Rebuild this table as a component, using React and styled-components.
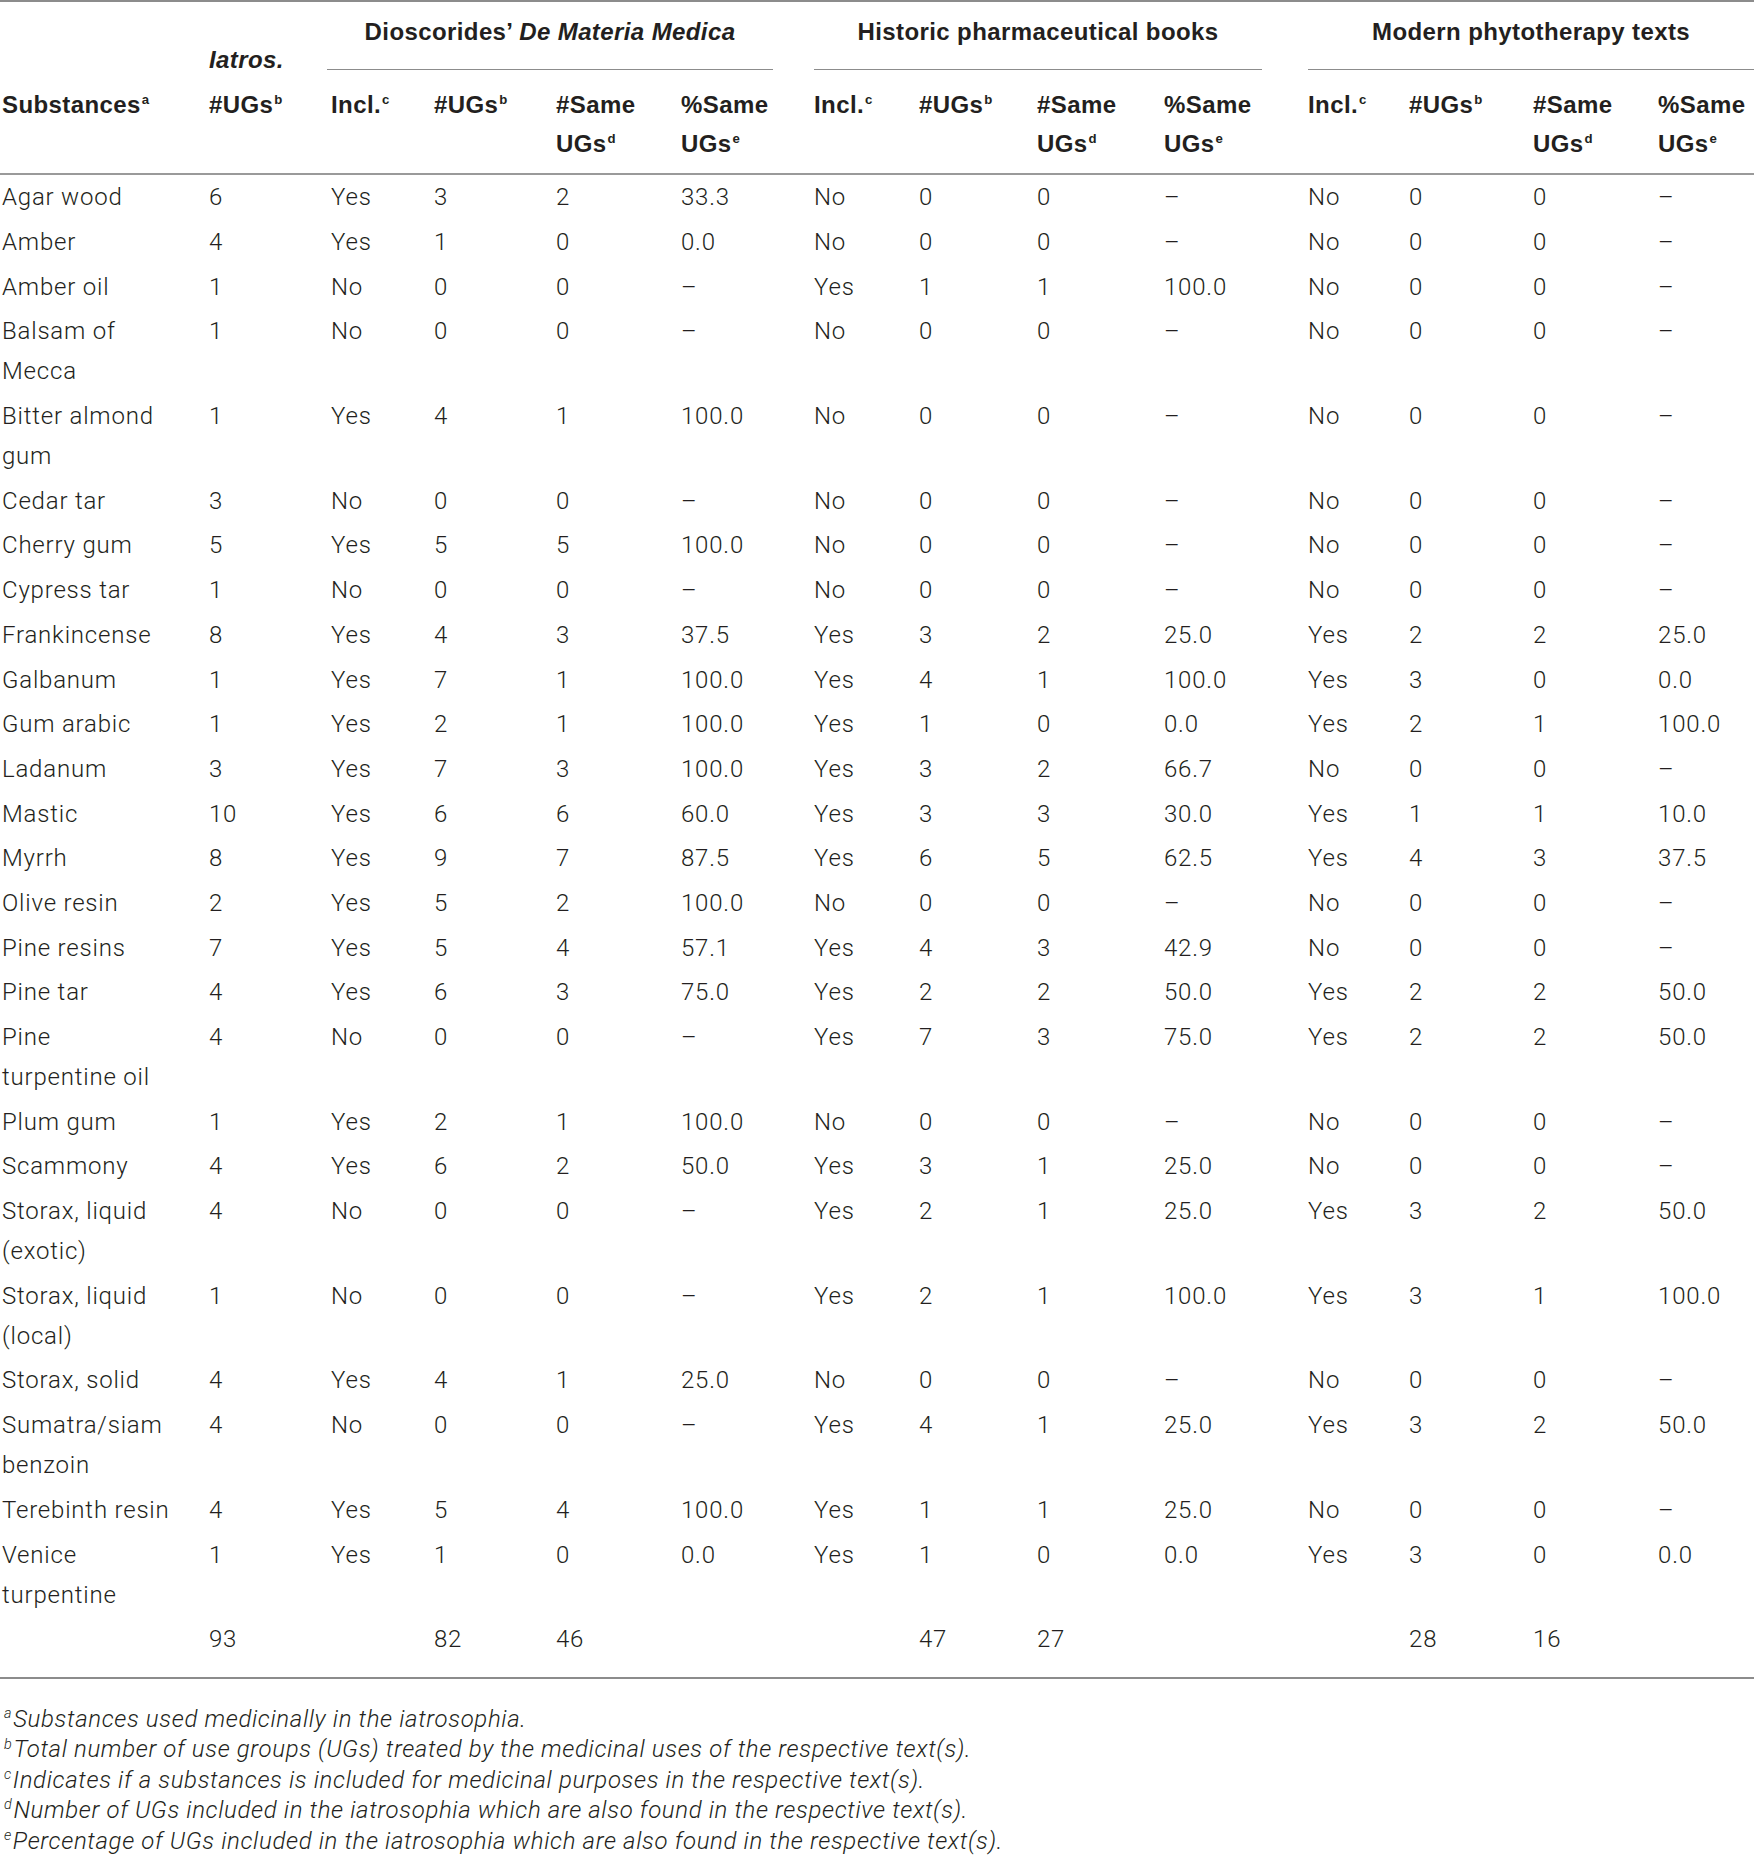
import React from "react";
import styled, { createGlobalStyle } from "styled-components";

const GlobalStyle = createGlobalStyle`
  html, body { margin: 0; padding: 0; background: #ffffff; }
  body { color: #231f20; }
`;

const Page = styled.div`
  width: 1754px;
  background: #ffffff;
`;

const Table = styled.table`
  width: 1754px;
  border-collapse: collapse;
  table-layout: fixed;
  border-top: 2px solid #8c8c8c;
  border-bottom: 2px solid #8c8c8c;
  font-family: "Roboto", "Liberation Sans", sans-serif;
  font-weight: 300;
  color: #231f20;
`;

const Col = styled.col`
  width: ${(p) => p.$w}px;
`;

const HeadRow = styled.tr`
  border-bottom: ${(p) => (p.$ruled ? "2px solid #9a9a9a" : "none")};
`;

const GroupTh = styled.th`
  padding: 10px ${(p) => p.$pr}px 0 0;
  text-align: center;
  vertical-align: top;
  font-family: "Liberation Sans", "Roboto", sans-serif;
  font-weight: 700;
  font-size: 24px;
  letter-spacing: 0.4px;
  line-height: 40px;
`;

const GroupLabel = styled.div`
  padding-bottom: 17px;
  border-bottom: 1px solid #8c8c8c;
  margin-left: ${(p) => p.$ml}px;
`;

const TopTh = styled.th`
  padding: 0 0 0 2px;
  text-align: left;
  vertical-align: bottom;
  font-family: "Liberation Sans", "Roboto", sans-serif;
  font-weight: 700;
  font-style: ${(p) => (p.$italic ? "italic" : "normal")};
  font-size: 24px;
  letter-spacing: 0.4px;
  line-height: 20px;
`;

const ColTh = styled.th`
  padding: 15px 0 10px 2px;
  text-align: left;
  vertical-align: top;
  font-family: "Liberation Sans", "Roboto", sans-serif;
  font-weight: 700;
  font-size: 24px;
  letter-spacing: 0.4px;
  line-height: 39px;
`;

const Sup = styled.sup`
  font-size: 0.55em;
  font-weight: inherit;
  vertical-align: 0.7em;
  line-height: 0;
  margin-left: 1px;
`;

const Td = styled.td`
  padding: 2.35px 0 2.35px 2px;
  text-align: left;
  vertical-align: top;
  font-size: 24px;
  letter-spacing: 0.8px;
  line-height: 40px;
`;

const TotalTd = styled(Td)`
  padding: 2px 0 18px 2px;
`;

const Notes = styled.div`
  padding: 25px 0 0 4px;
  font-family: "Roboto", "Liberation Sans", sans-serif;
  font-weight: 300;
  font-style: italic;
  font-size: 24px;
  letter-spacing: 0.64px;
  line-height: 30.4px;
  color: #231f20;
`;

const Note = styled.div`
  white-space: nowrap;
`;

const NoteMark = styled.sup`
  font-size: 0.6em;
  vertical-align: 0.6em;
  line-height: 0;
  margin-right: 1px;
`;

const widths = [207, 122, 103, 122, 125, 133, 105, 118, 127, 144, 101, 124, 125, 98];

const rows = [
  [["Agar wood"], "6", "Yes", "3", "2", "33.3", "No", "0", "0", "–", "No", "0", "0", "–"],
  [["Amber"], "4", "Yes", "1", "0", "0.0", "No", "0", "0", "–", "No", "0", "0", "–"],
  [["Amber oil"], "1", "No", "0", "0", "–", "Yes", "1", "1", "100.0", "No", "0", "0", "–"],
  [["Balsam of", "Mecca"], "1", "No", "0", "0", "–", "No", "0", "0", "–", "No", "0", "0", "–"],
  [["Bitter almond", "gum"], "1", "Yes", "4", "1", "100.0", "No", "0", "0", "–", "No", "0", "0", "–"],
  [["Cedar tar"], "3", "No", "0", "0", "–", "No", "0", "0", "–", "No", "0", "0", "–"],
  [["Cherry gum"], "5", "Yes", "5", "5", "100.0", "No", "0", "0", "–", "No", "0", "0", "–"],
  [["Cypress tar"], "1", "No", "0", "0", "–", "No", "0", "0", "–", "No", "0", "0", "–"],
  [["Frankincense"], "8", "Yes", "4", "3", "37.5", "Yes", "3", "2", "25.0", "Yes", "2", "2", "25.0"],
  [["Galbanum"], "1", "Yes", "7", "1", "100.0", "Yes", "4", "1", "100.0", "Yes", "3", "0", "0.0"],
  [["Gum arabic"], "1", "Yes", "2", "1", "100.0", "Yes", "1", "0", "0.0", "Yes", "2", "1", "100.0"],
  [["Ladanum"], "3", "Yes", "7", "3", "100.0", "Yes", "3", "2", "66.7", "No", "0", "0", "–"],
  [["Mastic"], "10", "Yes", "6", "6", "60.0", "Yes", "3", "3", "30.0", "Yes", "1", "1", "10.0"],
  [["Myrrh"], "8", "Yes", "9", "7", "87.5", "Yes", "6", "5", "62.5", "Yes", "4", "3", "37.5"],
  [["Olive resin"], "2", "Yes", "5", "2", "100.0", "No", "0", "0", "–", "No", "0", "0", "–"],
  [["Pine resins"], "7", "Yes", "5", "4", "57.1", "Yes", "4", "3", "42.9", "No", "0", "0", "–"],
  [["Pine tar"], "4", "Yes", "6", "3", "75.0", "Yes", "2", "2", "50.0", "Yes", "2", "2", "50.0"],
  [["Pine", "turpentine oil"], "4", "No", "0", "0", "–", "Yes", "7", "3", "75.0", "Yes", "2", "2", "50.0"],
  [["Plum gum"], "1", "Yes", "2", "1", "100.0", "No", "0", "0", "–", "No", "0", "0", "–"],
  [["Scammony"], "4", "Yes", "6", "2", "50.0", "Yes", "3", "1", "25.0", "No", "0", "0", "–"],
  [["Storax, liquid", "(exotic)"], "4", "No", "0", "0", "–", "Yes", "2", "1", "25.0", "Yes", "3", "2", "50.0"],
  [["Storax, liquid", "(local)"], "1", "No", "0", "0", "–", "Yes", "2", "1", "100.0", "Yes", "3", "1", "100.0"],
  [["Storax, solid"], "4", "Yes", "4", "1", "25.0", "No", "0", "0", "–", "No", "0", "0", "–"],
  [["Sumatra/siam", "benzoin"], "4", "No", "0", "0", "–", "Yes", "4", "1", "25.0", "Yes", "3", "2", "50.0"],
  [["Terebinth resin"], "4", "Yes", "5", "4", "100.0", "Yes", "1", "1", "25.0", "No", "0", "0", "–"],
  [["Venice", "turpentine"], "1", "Yes", "1", "0", "0.0", "Yes", "1", "0", "0.0", "Yes", "3", "0", "0.0"],
];

const totals = ["", "93", "", "82", "46", "", "", "47", "27", "", "", "28", "16", ""];

const subHeads = [
  { lines: ["Incl."], sup: "c" },
  { lines: ["#UGs"], sup: "b" },
  { lines: ["#Same", "UGs"], sup: "d" },
  { lines: ["%Same", "UGs"], sup: "e" },
];

const notes = [
  ["a", "Substances used medicinally in the iatrosophia."],
  ["b", "Total number of use groups (UGs) treated by the medicinal uses of the respective text(s)."],
  ["c", "Indicates if a substances is included for medicinal purposes in the respective text(s)."],
  ["d", "Number of UGs included in the iatrosophia which are also found in the respective text(s)."],
  ["e", "Percentage of UGs included in the iatrosophia which are also found in the respective text(s)."],
];

function HeadCell({ lines, sup }) {
  return (
    <ColTh>
      {lines.map((l, i) => (
        <React.Fragment key={i}>
          {i > 0 && <br />}
          {l}
          {i === lines.length - 1 && <Sup>{sup}</Sup>}
        </React.Fragment>
      ))}
    </ColTh>
  );
}

export default function App() {
  return (
    <Page>
      <GlobalStyle />
      <Table>
        <colgroup>
          {widths.map((w, i) => (
            <Col key={i} $w={w} />
          ))}
        </colgroup>
        <thead>
          <HeadRow>
            <TopTh />
            <TopTh $italic>Iatros.</TopTh>
            <GroupTh colSpan={4} $pr={39}>
              <GroupLabel $ml={-2}>
                Dioscorides’ <i>De Materia Medica</i>
              </GroupLabel>
            </GroupTh>
            <GroupTh colSpan={4} $pr={44}>
              <GroupLabel $ml={2}>Historic pharmaceutical books</GroupLabel>
            </GroupTh>
            <GroupTh colSpan={4} $pr={0}>
              <GroupLabel $ml={2}>Modern phytotherapy texts</GroupLabel>
            </GroupTh>
          </HeadRow>
          <HeadRow $ruled>
            <HeadCell lines={["Substances"]} sup="a" />
            <HeadCell lines={["#UGs"]} sup="b" />
            {[0, 1, 2].map((g) =>
              subHeads.map((h, i) => <HeadCell key={`${g}-${i}`} lines={h.lines} sup={h.sup} />)
            )}
          </HeadRow>
        </thead>
        <tbody>
          {rows.map((r, ri) => (
            <tr key={ri}>
              <Td>
                {r[0].map((l, i) => (
                  <React.Fragment key={i}>
                    {i > 0 && <br />}
                    {l}
                  </React.Fragment>
                ))}
              </Td>
              {r.slice(1).map((c, ci) => (
                <Td key={ci}>{c}</Td>
              ))}
            </tr>
          ))}
          <tr>
            {totals.map((t, i) => (
              <TotalTd key={i}>{t}</TotalTd>
            ))}
          </tr>
        </tbody>
      </Table>
      <Notes>
        {notes.map(([m, t]) => (
          <Note key={m}>
            <NoteMark>{m}</NoteMark>
            {t}
          </Note>
        ))}
      </Notes>
    </Page>
  );
}
